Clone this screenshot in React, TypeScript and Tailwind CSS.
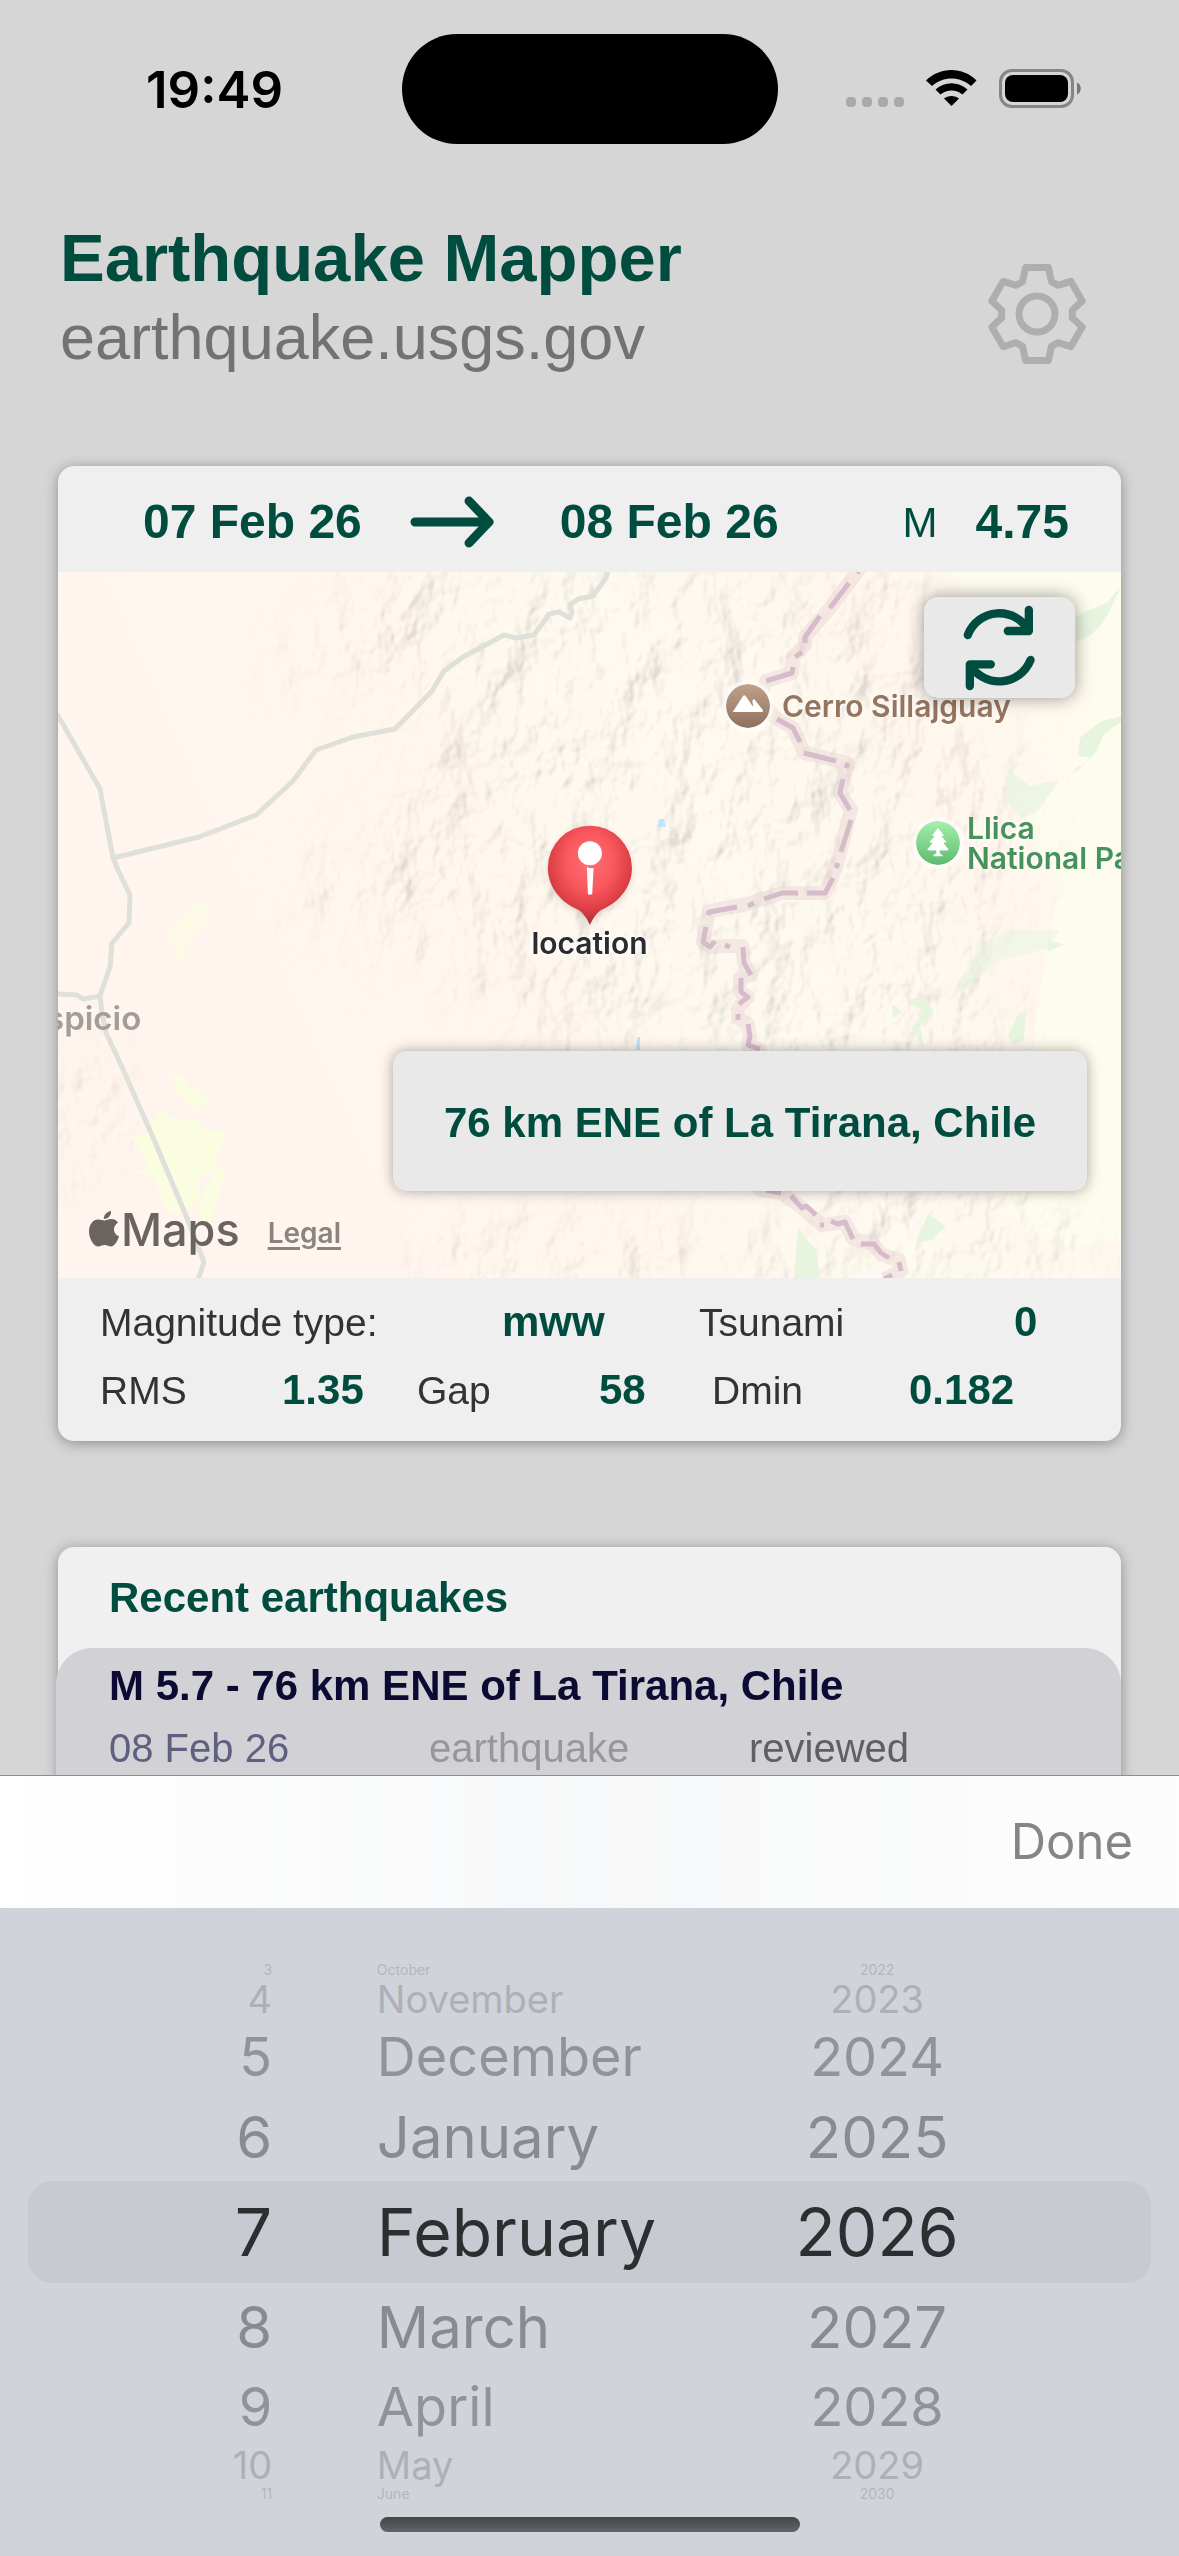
import { useState } from "react";
import clsx from "clsx";

const MONTHS = [
  "January",
  "February",
  "March",
  "April",
  "May",
  "June",
  "July",
  "August",
  "September",
  "October",
  "November",
  "December",
];

const OFFSETS = [-4, -3, -2, -1, 0, 1, 2, 3, 4];

// row look by distance from the selected row
const WHEEL_ROWS = [
  "h-[102px] text-[66px] text-[#2d2e2f]",
  "h-[88px] text-[58px] text-[#8a8b8f]",
  "h-[72px] text-[54px] text-[#929397]",
  "h-[44px] text-[38px] text-[#aeb0b6]",
  "h-[14px] text-[14px] text-[#b4b6bd]",
];

const wrap = (n: number, size: number) => ((n % size) + size) % size;

function StatusBar() {
  return (
    <div className="grid grid-cols-[1fr_376px_1fr] items-center pt-[34px] font-[Inter,sans-serif]">
      <p className="pl-[146px] text-[51px] leading-none font-semibold text-black">19:49</p>
      <div className="h-[110px] rounded-full bg-black" />
      <div className="flex items-center justify-end pr-[98px]">
        <svg className="h-10 w-[235px]" viewBox="0 0 235 40" fill="none">
          {[0, 16, 32, 48].map((x) => (
            <rect key={x} x={x} y="28" width="10" height="10" rx="4" fill="#aaaaaa" />
          ))}
          <path d="M80 11.5 L86 17 C97 7 114 7 125 17 L130.500 11.500 C117 -2.500 94 -2.500 80 11.500Z" fill="#000" />
          <path d="M89.500 20.500 L94.500 25.500 C101 20 110 20 116.500 25.500 L121.500 20.500 C112 12 99 12 89.500 20.500Z" fill="#000" />
          <path d="M98 29.500 L105.500 37 L113 29.500 C109 26 102 26 98 29.500Z" fill="#000" />
          <rect x="154.500" y="1.500" width="72" height="36" rx="11.500" stroke="#868686" strokeWidth="3" />
          <rect x="159" y="6" width="63" height="27" rx="8" fill="#000" />
          <path d="M231 13.500 C236 15.500 236 23.500 231 25.500Z" fill="#777" />
        </svg>
      </div>
    </div>
  );
}

function Header() {
  return (
    <header className="mt-[74px] flex justify-between pr-[92px] pl-[60px]">
      <div>
        <h1 className="text-[67px] leading-[80px] font-bold text-[#004d40]">Earthquake Mapper</h1>
        <p className="text-[63px] leading-[78px] text-[#727272]">earthquake.usgs.gov</p>
      </div>
      <button aria-label="Settings" className="mt-[46px] h-[100px] cursor-pointer">
        <svg className="size-[100px]" viewBox="0 0 100 100" fill="none" stroke="#aeaeae" strokeWidth="7" strokeLinejoin="round">
          <polygon points="38.600,3.400 61.400,3.400 64.400,17.600 70.900,21.300 83.800,17.300 95.200,37 85.300,46.300 85.300,53.700 95.200,63 83.800,82.700 70.900,78.700 64.400,82.400 61.400,96.600 38.600,96.600 35.600,82.400 29.100,78.700 16.200,82.700 4.800,63 14.700,53.700 14.700,46.300 4.800,37 16.200,17.300 29.100,21.300 35.600,17.600" />
          <circle cx="50" cy="50" r="18" />
        </svg>
      </button>
    </header>
  );
}

function Terrain() {
  return (
    <svg className="absolute inset-0 size-full" viewBox="58 572 1063 706" preserveAspectRatio="xMidYMid slice" fill="none">
      <defs>
        <linearGradient id="land" x1="0" x2="1" y1="0.300" y2="0">
          <stop offset="0" stopColor="#fff5ee" />
          <stop offset="0.350" stopColor="#fff7ee" />
          <stop offset="0.550" stopColor="#fefaf1" />
          <stop offset="0.750" stopColor="#fff7ee" />
          <stop offset="1" stopColor="#fffbee" />
        </linearGradient>
        <filter id="relief" x="0" y="0" width="1" height="1">
          <feTurbulence type="fractalNoise" baseFrequency="0.022 0.016" numOctaves="4" seed="11" />
          <feDiffuseLighting surfaceScale="26" diffuseConstant="1.250" lightingColor="#fffdf4">
            <feDistantLight azimuth="215" elevation="55" />
          </feDiffuseLighting>
        </filter>
        <filter id="soft" x="-0.300" y="-0.300" width="1.600" height="1.600">
          <feGaussianBlur stdDeviation="34" />
        </filter>
        <mask id="hills">
          <g fill="#fff" filter="url(#soft)">
            <path d="M380 560 H930 L960 700 L1040 780 L1010 900 L1010 1060 L1040 1290 H860 L780 1050 L640 1040 L560 1060 L440 960 L280 900 L420 790 L440 690 L270 690Z" />
            <path d="M60 1060 L110 1040 L120 1150 L60 1200Z" />
            <path d="M420 1230 H1121 V1290 H420Z" />
          </g>
        </mask>
      </defs>
      <rect x="58" y="572" width="1063" height="706" fill="url(#land)" />
      <path d="M950 572 H1121 V1240 L1060 1246 L1020 1225 L1000 1190 L1030 1130 L1035 1020 L1060 880 L1025 830 L1090 740 L1095 690 L1000 620Z" fill="#fefced" />
      <rect x="58" y="572" width="1063" height="706" filter="url(#relief)" mask="url(#hills)" opacity="0.110" className="mix-blend-multiply" />

      <g fill="#e8f5de">
        <path d="M1121 586 L1108 602 L1076 616 V642 L1092 634 L1102 624 L1110 610Z" />
        <path d="M1121 716 L1100 722 L1080 738 L1078 756 L1092 758 L1074 770 L1076 772 L1096 752 L1104 734 L1121 722Z" />
        <path d="M1008 770 L1030 786 L1059 780 L1040 808 L1022 820 L1006 800Z" opacity="0.800" />
        <path d="M950 1000 L980 945 L1010 930 L1060 930 L1048 948 L1000 960 L970 985Z" opacity="0.550" />
        <path d="M1048 941 L1064 944 L1048 952Z" />
        <path d="M1018 1014 L1026 1010 L1024 1040 L1014 1045 L1008 1036Z" />
        <path d="M906 1000 L924 997 L934 1012 L920 1026 L924 1049 L911 1028 L924 1012Z" />
        <path d="M892 1004 L902 1012 L893 1018Z" />
        <path d="M798 1228 L816 1250 L820 1278 H794Z" />
        <path d="M928 1214 L946 1226 L932 1240 L916 1243Z" />
      </g>
      <g fill="#fafddf">
        <path d="M170 1075 L184 1075 L189 1090 L196 1088 L209 1098 L200 1110 L178 1094Z" />
        <path d="M130 1138 L146 1134 L160 1109 L176 1120 L198 1119 L206 1132 L228 1130 L220 1148 L214 1170 L198 1180 L200 1198 L186 1212 L166 1212 L154 1178 L136 1172 L148 1168 L140 1150Z" />
        <path d="M218 1168 L226 1172 L216 1205 L208 1228 L198 1212 L204 1190Z" />
        <path d="M166 938 L190 906 L209 900 L208 924 L190 940 L184 972Z" opacity="0.500" />
      </g>
      <path d="M659 819 h5 l2 8 h-9Z M637 1037 h3 v13 h-4Z" fill="#bfe6fa" />

      <g stroke="#dfe0d9" strokeWidth="5" strokeLinejoin="round">
        <path d="M57 714 L100 789 L113 858 L118 870 L130 895 L129 923 L112 943 L110 967 L100 996 L102 1013 L106 1033 L122 1067 L155 1142 L187 1218 L204 1262 L198 1280" />
        <path d="M113 858 L199 837 L256 815 L293 781 L316 750 L353 737 L395 729 L432 691 L444 671 L463 657 L504 635 L516 638 L534 635 L549 614 L559 612 L570 618 L572 612 L570 605 L578 599 L593 596 L606 578 L608 570" />
        <path d="M57 994 L77 995 L83 999 L100 996" />
      </g>

      <path
        d="M861 567 L849 583 L830 608 L805 637 V645 L793 657 L792 673 L766 681 L759 700 L777 719 L793 728 L804 753 L848 763 L840 793 L851 810 L836 868 L825 893 H781 L748 904 L709 911 L703 942 L710 947 L727 946 L742 946 L744 963 L751 975 L740 978 V992 L748 997 L738 1008 L738 1018 L748 1024 L750 1037 L748 1045 L760 1050 V1190 L781 1193 L801 1207 L822 1225 L845 1222 L853 1239 L873 1244 L882 1255 L899 1260 L901 1271 L884 1279"
        stroke="#e9d3d3"
        strokeOpacity="0.450"
        strokeWidth="14"
        strokeLinejoin="round"
      />
      <path
        d="M861 567 L857 573 M849 583 L830 608 M820 616 L805 637 V643 M802 652 L795 657 M793 667 L792 673 L766 681 M777 719 L793 728 L800 742 M804 753 L836 761 M848 763 L846 768 M843 779 L840 793 L850 810 M851 820 L841 852 M838 863 L836 868 M833 878 L825 893 H807 M798 893 H782 L764 899 M754 903 L748 906 M737 907 L709 912 L708 915 M706 927 L703 942 L710 947 L715 941 M725 945 L730 947 M743 947 L744 963 L751 975 M741 978 V992 L748 997 L739 1004 M738 1014 V1020 M748 1024 L750 1037 L748 1045 L760 1049 M766 1190 L781 1193 M791 1196 L802 1208 L806 1206 L816 1215 M820 1225 H824 M831 1221 L838 1224 L845 1222 L853 1239 M861 1244 H874 L881 1253 L889 1258 M899 1262 L901 1271 M892 1275 L884 1279"
        stroke="#d6bbcb"
        strokeWidth="5"
        strokeLinejoin="round"
      />
    </svg>
  );
}

function LocationPin() {
  return (
    <svg className="h-[102px] w-[88px] drop-shadow-md" viewBox="75 42 264 306">
      <defs>
        <radialGradient id="pin" cx="0.500" cy="0.360" r="0.620">
          <stop offset="0" stopColor="#ff7075" />
          <stop offset="0.480" stopColor="#f8575c" />
          <stop offset="0.800" stopColor="#d93d43" />
          <stop offset="1" stopColor="#ad2f35" />
        </radialGradient>
      </defs>
      <path
        d="M207 345 C200 330 188 305 165 296 C112 270 81 225 81 173 A126 126 0 0 1 333 173 C333 225 302 270 249 296 C226 305 214 330 207 345Z"
        fill="url(#pin)"
      />
      <circle cx="207" cy="130" r="36" fill="#fff" />
      <path d="M198 171 Q207 176 218 174 L214 252 Q207 257 201 252Z" fill="#fff" />
    </svg>
  );
}

function QuakeMap() {
  return (
    <div className="relative h-[706px] overflow-hidden font-[Inter,sans-serif]">
      <Terrain />

      <div className="absolute top-[112px] left-[668px] flex items-center gap-3">
        <svg className="size-11 rounded-full ring-4 ring-white/60" viewBox="0 0 132 132">
          <defs>
            <linearGradient id="peak" x2="0" y2="1">
              <stop stopColor="#bfa18a" />
              <stop offset="1" stopColor="#8f705d" />
            </linearGradient>
          </defs>
          <circle cx="66" cy="66" r="66" fill="url(#peak)" />
          <path d="M20 84 L51 36 Q55 31 59 36 L77 62 L82 68 L79 52 Q79 46 85 46 L111 79 Q113 84 107 84Z" fill="#fff" />
        </svg>
        <p className="text-[30px] leading-[34px] font-semibold whitespace-nowrap text-[#967560] [text-shadow:0_0_5px_#fff]">
          Cerro Sillajguay
        </p>
      </div>

      <div className="absolute top-[241px] left-[858px] flex items-center gap-[7px]">
        <svg className="size-11 rounded-full ring-4 ring-white/60" viewBox="0 0 132 132">
          <defs>
            <linearGradient id="park" x2="0" y2="1">
              <stop stopColor="#a5f0ac" />
              <stop offset="1" stopColor="#5cba6e" />
            </linearGradient>
          </defs>
          <circle cx="66" cy="66" r="66" fill="url(#park)" />
          <path
            d="M66 20 L84 44 L76 46 L92 63 L82 66 L99 86 Q86 90 71 88 V97 L80 103 V106 H52 V103 L61 97 V88 Q46 90 33 86 L50 66 L40 63 L56 46 L48 44Z"
            fill="#fff"
          />
        </svg>
        <p className="text-[30px] leading-[30px] font-semibold whitespace-nowrap text-[#45925a] [text-shadow:0_0_5px_#fff]">
          Llica
          <br />
          National Park
        </p>
      </div>

      <p className="absolute top-[426px] -left-3 text-[33px] leading-10 font-semibold text-[#a19d99]">spicio</p>

      <div className="absolute top-[252px] left-1/2 flex -translate-x-1/2 flex-col items-center">
        <LocationPin />
        <p className="text-[30px] leading-[34px] font-semibold text-[#2c2c2e] [text-shadow:0_0_4px_#fff,0_0_4px_#fff,0_0_6px_#fff]">
          location
        </p>
      </div>

      <button
        aria-label="Refresh"
        className="absolute top-[25px] right-[46px] flex h-[101px] w-[151px] cursor-pointer items-center justify-center rounded-[14px] bg-[#e9e9e9] shadow-[0_0_18px_rgba(0,0,0,0.4)]"
      >
        <svg className="h-[86px] w-[73px]" viewBox="760 135 218 258" fill="none" stroke="#004d40" strokeWidth="25" strokeLinecap="round" strokeLinejoin="round">
          <path d="M774 225 A101 101 0 0 1 957 212 M957 150 V213 H894" />
          <path d="M962 300 A101 101 0 0 1 780 313 M780 378 V313 H843" />
        </svg>
      </button>

      <p className="absolute right-[34px] bottom-[87px] flex h-[140px] w-[694px] items-center justify-center rounded-[14px] bg-[#e9e9e9] pt-[2px] font-[Liberation_Sans,sans-serif] text-[42px] font-bold text-[#004d40] shadow-[0_0_14px_rgba(0,0,0,0.35)]">
        76 km ENE of La Tirana, Chile
      </p>

      <div className="absolute bottom-[20px] left-[31px] flex items-center text-[#69645f]">
        <svg className="mb-[2px] h-9 w-[30px]" viewBox="0 0 30 36" fill="currentColor">
          <path d="M15.500 9.500 C17 9.500 19.500 7.800 22.500 8 C25.500 8.200 27.800 9.500 29 11.500 C23 15.500 24 23 30 25.500 C28.500 30 25.300 35.500 22 35.500 C19.500 35.500 18.500 34 15.500 34 C12.500 34 11.500 35.500 9 35.500 C5 35.500 0 28 0 20.500 C0 13 4.500 8.500 9 8.500 C12 8.500 13.700 9.500 15.500 9.500Z" />
          <path d="M14.800 8 C14.500 4 18 0.500 22 0 C22.400 4.500 18.800 8 14.800 8Z" />
        </svg>
        <p className="ml-[2px] text-[45px] leading-[56px] font-medium">Maps</p>
        <a href="#legal" className="mt-[6px] ml-7 text-[28px] font-semibold text-[#88847f] underline decoration-[3px] underline-offset-4">
          Legal
        </a>
      </div>
    </div>
  );
}

function QuakeCard() {
  return (
    <section className="mx-[58px] mt-[90px] overflow-hidden rounded-[16px] bg-[#efefef] shadow-[0_2px_14px_rgba(0,0,0,0.35)]">
      <div className="flex h-[106px] items-center pt-[6px] pr-[52px] pl-[85px] text-[48px] font-bold text-[#004d40]">
        <button className="cursor-pointer">07 Feb 26</button>
        <svg className="ml-12 h-[52px] w-[84px]" viewBox="0 0 84 52" fill="none" stroke="currentColor" strokeWidth="9" strokeLinecap="round" strokeLinejoin="round">
          <path d="M5 26 H79 M59 5 L79 26 L59 47" />
        </svg>
        <button className="ml-[66px] cursor-pointer">08 Feb 26</button>
        <p className="ml-auto flex items-center gap-[38px]">
          <span className="text-[42px] font-normal">M</span>
          4.75
        </p>
      </div>

      <QuakeMap />

      <div className="pt-[10px] pb-[17px] pl-[42px] text-[39px] leading-[67px] text-[#333]">
        <div className="grid grid-cols-[402fr_197fr_315fr_107fr] items-baseline">
          <span>Magnitude type:</span>
          <Value>mww</Value>
          <span>Tsunami</span>
          <Value>0</Value>
        </div>
        <div className="grid grid-cols-[182fr_135fr_182fr_113fr_197fr_212fr] items-baseline">
          <span>RMS</span>
          <Value>1.35</Value>
          <span>Gap</span>
          <Value>58</Value>
          <span>Dmin</span>
          <Value>0.182</Value>
        </div>
      </div>
    </section>
  );
}

function Value({ children }: { children: string }) {
  return <span className="text-[42px] font-bold text-[#004d40]">{children}</span>;
}

function RecentList() {
  return (
    <section className="mx-[58px] mt-[106px] h-[900px] rounded-[16px] bg-[#f0f0f0] shadow-[0_2px_14px_rgba(0,0,0,0.35)]">
      <h2 className="pl-[51px] text-[42px] leading-[101px] font-bold text-[#004d40]">Recent earthquakes</h2>
      <a href="#quake" className="-ml-[2px] block h-[300px] rounded-[36px] bg-[#d2d1d6] pt-2 pl-[53px]">
        <p className="text-[42px] leading-[60px] font-bold text-[#0a0a32]">M 5.7 - 76 km ENE of La Tirana, Chile</p>
        <p className="grid grid-cols-[320fr_320fr_372fr] text-[40px] leading-[64px]">
          <span className="text-[#5f5f80]">08 Feb 26</span>
          <span className="text-[#979797]">earthquake</span>
          <span className="text-[#606060]">reviewed</span>
        </p>
      </a>
    </section>
  );
}

type WheelProps = {
  label: string;
  className: string;
  format: (offset: number) => string | number;
  onPick: (offset: number) => void;
};

function Wheel({ label, className, format, onPick }: WheelProps) {
  return (
    <div role="group" aria-label={label} className={clsx("relative flex flex-col", className)}>
      {OFFSETS.map((offset) => (
        <button
          key={offset}
          aria-pressed={offset === 0}
          onClick={() => onPick(offset)}
          className={clsx("flex cursor-pointer items-center leading-none", WHEEL_ROWS[Math.abs(offset)])}
        >
          {format(offset)}
        </button>
      ))}
    </div>
  );
}

function DateSheet() {
  const [day, setDay] = useState(7);
  const [month, setMonth] = useState(1);
  const [year, setYear] = useState(2026);

  return (
    <div className="fixed inset-x-0 bottom-0 bg-[#d1d3db] font-[Inter,sans-serif]">
      <div className="flex h-[133px] items-center justify-end border-t border-[#8e8e92] bg-linear-to-r from-white via-[#f7f8f9] to-[#fdfdfd] pr-[46px]">
        <button className="cursor-pointer text-[49px] text-[#858585]">Done</button>
      </div>
      <div className="relative mt-[55px] grid grid-cols-[273fr_105fr_420fr_160fr_221fr]">
        <div className="absolute inset-x-7 top-[218px] h-[102px] rounded-[24px] bg-[#c8cad2]" />
        <Wheel
          label="Day"
          className="items-end"
          format={(o) => wrap(day + o - 1, 31) + 1}
          onPick={(o) => setDay(wrap(day + o - 1, 31) + 1)}
        />
        <Wheel
          label="Month"
          className="col-start-3 items-start"
          format={(o) => MONTHS[wrap(month + o, 12)]}
          onPick={(o) => setMonth(wrap(month + o, 12))}
        />
        <Wheel label="Year" className="items-center" format={(o) => year + o} onPick={(o) => setYear(year + o)} />
      </div>
      <div className="mx-auto mt-4 mb-6 h-[15px] w-[420px] rounded-full bg-linear-to-b from-[#434548] to-[#636467]" />
    </div>
  );
}

export default function App() {
  return (
    <main className="h-screen overflow-hidden bg-[#d6d6d6] font-[Liberation_Sans,Arial,sans-serif]">
      <StatusBar />
      <Header />
      <QuakeCard />
      <RecentList />
      <DateSheet />
    </main>
  );
}
